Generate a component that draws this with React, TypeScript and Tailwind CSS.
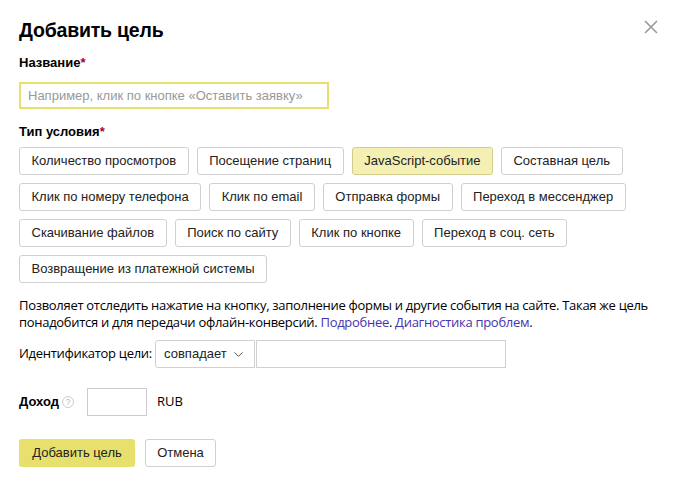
import { ChevronDown } from 'lucide-react';

const rows: string[][] = [
  ['Количество просмотров', 'Посещение страниц', 'JavaScript-событие', 'Составная цель'],
  ['Клик по номеру телефона', 'Клик по email', 'Отправка формы', 'Переход в мессенджер'],
  ['Скачивание файлов', 'Поиск по сайту', 'Клик по кнопке', 'Переход в соц. сеть'],
  ['Возвращение из платежной системы'],
];

const SELECTED = 'JavaScript-событие';

export default function App() {
  return (
    <div className="relative w-[675px] h-[484px] bg-white text-black font-['Liberation_Sans',Arial,sans-serif] overflow-hidden">
      <button className="absolute left-[643px] top-[19px] w-[16px] h-[16px] text-[#999]" aria-label="Закрыть">
        <svg viewBox="0 0 16 16" width="16" height="16" fill="none" stroke="currentColor" strokeWidth="1.6">
          <path d="M2 2 L14 14 M14 2 L2 14" />
        </svg>
      </button>

      <div className="px-[19px] pt-[17px]">
        <h1 className="text-[19.5px] leading-[26px] font-bold tracking-[-0.2px]">Добавить цель</h1>

        <div className="mt-[12px] text-[13px] leading-[16px] font-bold">
          Название<span className="text-[#a3003d]">*</span>
        </div>
        <input
          className="mt-[11px] block w-[310px] h-[27px] border-2 border-[#e8e06c] px-[7px] text-[13px] outline-none placeholder:text-[#999]"
          placeholder="Например, клик по кнопке «Оставить заявку»"
        />

        <div className="mt-[15px] text-[13px] leading-[16px] font-bold">
          Тип условия<span className="text-[#a3003d]">*</span>
        </div>

        <div className="mt-[7px] flex flex-col gap-[8px]">
          {rows.map((row, i) => (
            <div key={i} className="flex gap-[8px]">
              {row.map(label => (
                <button
                  key={label}
                  className={
                    label === SELECTED
                      ? 'h-[28px] px-[11.5px] rounded-[3px] border border-[#d4cd8a] bg-[#f4efb3] text-[13px] text-[#222]'
                      : 'h-[28px] px-[11.5px] rounded-[3px] border border-[#d0d0d0] bg-white text-[13px] text-[#222]'
                  }
                >
                  {label}
                </button>
              ))}
            </div>
          ))}
        </div>

        <p className="mt-[14px] w-[660px] text-[13px] leading-[17px] font-['Open_Sans','Liberation_Sans',sans-serif] tracking-[-0.3px]">
          Позволяет отследить нажатие на кнопку, заполнение формы и другие события на сайте. Такая же цель
          <br />
          понадобится и для передачи офлайн-конверсий. <a className="text-[#4733b0]">Подробнее</a>.{' '}
          <a className="text-[#4733b0]">Диагностика проблем</a>.
        </p>

        <div className="mt-[9px] flex items-center">
          <span className="text-[13px] mr-[3px] font-['Open_Sans','Liberation_Sans',sans-serif] tracking-[-0.3px]">Идентификатор цели:</span>
          <button className="h-[28px] w-[100px] flex items-center justify-center gap-[4px] rounded-l-[3px] border border-[#d0d0d0] text-[13px] text-[#222]">
            совпадает
            <ChevronDown className="w-[15px] h-[15px] text-[#333]" strokeWidth={1.3} />
          </button>
          <input className="ml-[1px] h-[28px] w-[250px] border border-[#d0d0d0] outline-none" />
        </div>

        <div className="mt-[20px] flex items-center">
          <span className="text-[13px] font-bold">Доход</span>
          <span className="ml-[3px] w-[12px] h-[12px] rounded-full border border-[#ccc] text-[#bbb] text-[9px] leading-[10px] flex items-center justify-center">?</span>
          <input className="ml-[13px] h-[28px] w-[60px] border border-[#ccc] outline-none" />
          <span className="ml-[10px] text-[13px] font-['Open_Sans','Liberation_Sans',sans-serif]">RUB</span>
        </div>

        <div className="mt-[23px] flex gap-[10px]">
          <button className="h-[28px] w-[116px] rounded-[3px] bg-[#e8e06c] text-[13px] text-[#222]">Добавить цель</button>
          <button className="h-[28px] w-[71px] rounded-[3px] border border-[#d0d0d0] bg-white text-[13px] text-[#222]">Отмена</button>
        </div>
      </div>
    </div>
  );
}
